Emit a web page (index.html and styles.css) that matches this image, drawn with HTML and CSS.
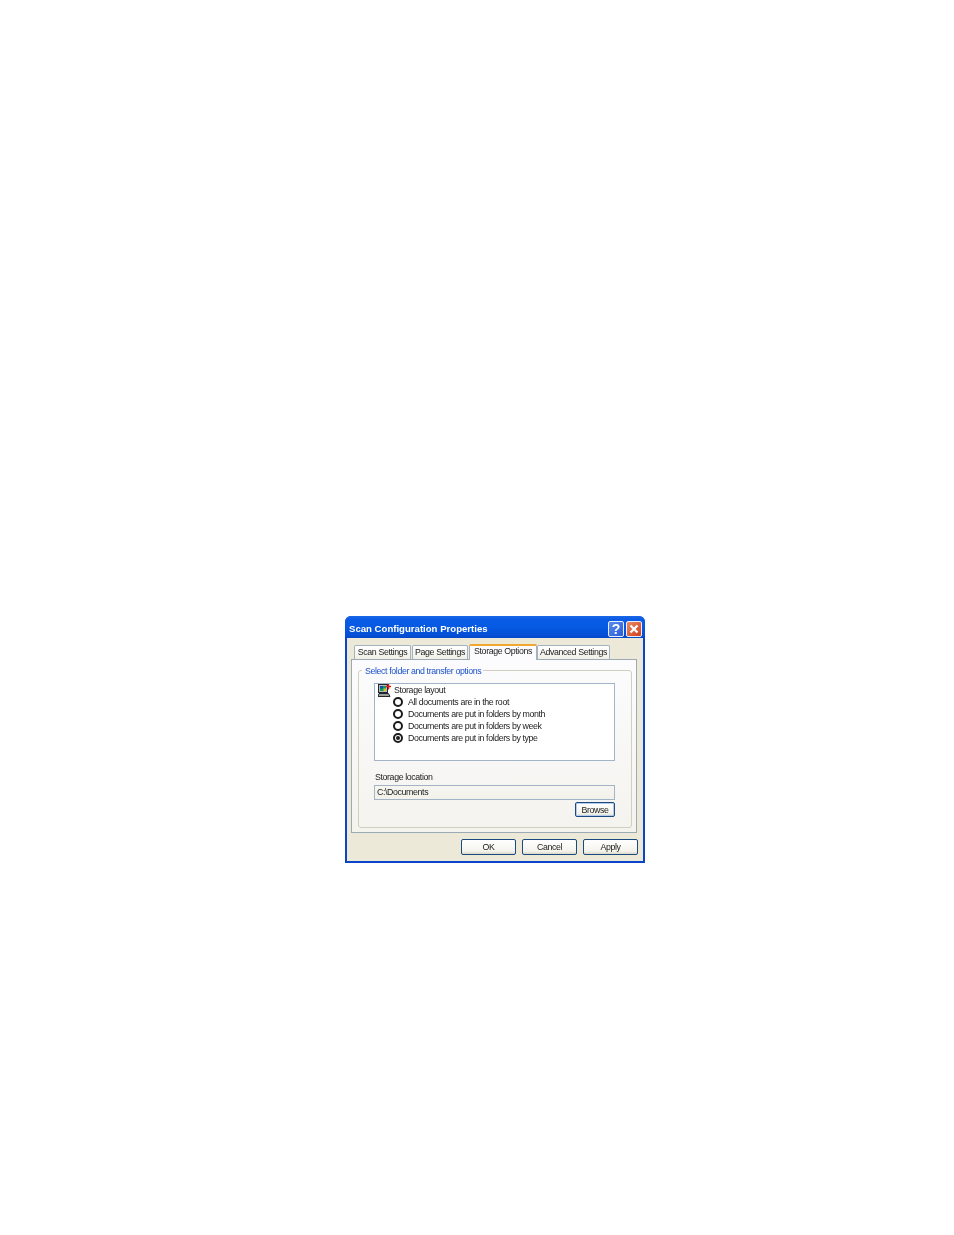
FILE: index.html
```html
<!DOCTYPE html>
<html lang="en">
<head>
<meta charset="utf-8">
<title>Scan Configuration Properties</title>
<link rel="stylesheet" href="styles.css">
</head>
<body>
<main class="page">
  <section class="window">
    <header class="titlebar">
      <h1 class="title">Scan Configuration Properties</h1>
      <div class="controls">
        <span class="ctl help">?</span>
        <span class="ctl close">
          <svg viewBox="0 0 16 16" width="16" height="16"><path d="M4.5 4.5l7 7M11.5 4.5l-7 7" stroke="#fff" stroke-width="2.2" fill="none"/></svg>
        </span>
      </div>
    </header>
    <div class="client">
      <nav class="tabs">
        <span class="tab tab-scan">Scan Settings</span>
        <span class="tab tab-page">Page Settings</span>
        <span class="tab tab-active">Storage Options</span>
        <span class="tab tab-adv">Advanced Settings</span>
      </nav>
      <div class="panel">
        <fieldset class="group">
          <legend class="legend">Select folder and transfer options</legend>
          <div class="list">
            <div class="list-head">
              <svg class="list-icon" viewBox="0 0 13 13" width="13" height="13">
                <rect x="0.5" y="0.5" width="9" height="8" fill="#b8bcb8" stroke="#20262e"/>
                <rect x="2" y="2" width="6" height="5" fill="#129a58"/>
                <rect x="2" y="2" width="3" height="2.5" fill="#1f48b8"/>
                <rect x="5.5" y="4.5" width="2.5" height="2.5" fill="#d8c020"/>
                <path d="M1 9.5h9.5l1.5 3h-12z" fill="#9a9e9a" stroke="#20262e" stroke-width="1"/>
                <path d="M10.5 0v5.5M8 2.5h5" stroke="#e01818" stroke-width="1.4"/>
              </svg>
              <span>Storage layout</span>
            </div>
            <div class="option"><span class="radio"></span><span>All documents are in the root</span></div>
            <div class="option"><span class="radio"></span><span>Documents are put in folders by month</span></div>
            <div class="option"><span class="radio"></span><span>Documents are put in folders by week</span></div>
            <div class="option"><span class="radio radio-on"></span><span>Documents are put in folders by type</span></div>
          </div>
          <div class="field-label">Storage location</div>
          <div class="input">C:\Documents</div>
          <div class="browse-row"><span class="btn btn-browse">Browse</span></div>
        </fieldset>
      </div>
      <footer class="actions">
        <span class="btn btn-main">OK</span>
        <span class="btn btn-main">Cancel</span>
        <span class="btn btn-main">Apply</span>
      </footer>
    </div>
  </section>
</main>
</body>
</html>
```
FILE: styles.css
```css
* { box-sizing: border-box; }
html, body { margin: 0; padding: 0; background: #fff; }
body {
  font-family: "Liberation Sans", Arial, sans-serif;
  font-size: 8.8px;
  letter-spacing: -0.38px;
  color: #222;
}
.page { width: 954px; height: 1235px; padding: 616px 0 0 345px; }

.window {
  width: 300px;
  height: 247px;
  display: flex;
  flex-direction: column;
  background: #0a45c8;
  border-radius: 6px 6px 0 0;
  overflow: hidden;
  filter: blur(0.25px);
}
.titlebar {
  height: 22px;
  flex: none;
  display: flex;
  align-items: center;
  justify-content: space-between;
  padding: 3px 3px 0 4px;
  background: linear-gradient(#1a66e6 0, #0a5ce6 15%, #0558e0 55%, #0450d6 85%, #0348c8 100%);
}
.title {
  margin: 0;
  font-size: 9.6px;
  font-weight: 700;
  letter-spacing: 0;
  color: #fff;
}
.controls { display: flex; gap: 2px; margin-top: 1px; }
.ctl {
  width: 16px;
  height: 16px;
  border: 1px solid #e8eefc;
  border-radius: 2px;
  display: flex;
  align-items: center;
  justify-content: center;
}
.help {
  background: linear-gradient(135deg, #5a8cf0, #2a5cd8);
  color: #fff;
  font-size: 14px;
  font-weight: 700;
  letter-spacing: 0;
}
.close { background: linear-gradient(135deg, #ec8a68, #d0401a); }
.close svg { margin: -1px; flex: none; }

.client {
  flex: 1;
  margin: 0 2px 2px;
  background: #ece9d8;
  display: flex;
  flex-direction: column;
  padding: 5px 6px 0 4px;
}
.tabs { display: flex; align-items: flex-end; height: 16px; flex: none; padding-left: 3px; position: relative; z-index: 1; white-space: nowrap; }
.tab {
  height: 14px;
  display: flex;
  align-items: center;
  justify-content: center;
  padding-bottom: 2px;
  border: 1px solid #a3b2bc;
  border-bottom: none;
  border-radius: 2px 2px 0 0;
  background: linear-gradient(#fff, #f0efe6);
  margin-right: 1px;
}
.tab-scan { width: 57px; }
.tab-page { width: 56px; }
.tab-active {
  width: 68px;
  height: 16px;
  margin-right: 0;
  padding-bottom: 5px;
  background: #fcfcfe;
  border-top: 2px solid #f0a830;
  margin-bottom: -1px;
}
.tab-adv { width: 73px; }

.panel {
  width: 286px;
  height: 174px;
  flex: none;
  border: 1px solid #9caab4;
  background: linear-gradient(#fcfcfe, #f4f3ee);
  padding: 4px 4px 4px 6px;
}
.group {
  margin: 0;
  padding: 7px 16px 0 15px;
  height: 164px;
  border: 1px solid #d0d0bf;
  border-radius: 3px;
  min-width: 0;
}
.legend {
  margin-left: -12px;
  padding: 2px 2px 0 3px;
  color: #1a50c8;
  line-height: 10px;
}
.list {
  height: 78px;
  border: 1px solid #a3b4c8;
  background: #fff;
  padding: 0 0 0 3px;
}
.list-head { display: flex; align-items: center; gap: 3px; height: 12px; }
.list-icon { flex: none; }
.option { display: flex; align-items: center; height: 12px; padding-left: 15px; gap: 5px; }
.radio {
  width: 10px;
  height: 10px;
  border: 2px solid #1c1c1c;
  border-radius: 50%;
  flex: none;
  display: flex;
  align-items: center;
  justify-content: center;
  background: #fff;
}
.radio-on::after {
  content: "";
  width: 4px;
  height: 4px;
  border-radius: 50%;
  background: #1c1c1c;
}
.field-label { margin-top: 11px; height: 13px; line-height: 11px; padding-left: 1px; }
.input {
  height: 15px;
  border: 1px solid #a3b4c8;
  background: linear-gradient(#f6f5ef, #f2f1ea);
  line-height: 13px;
  padding-left: 2px;
}
.browse-row { display: flex; justify-content: flex-end; margin-top: 2px; }
.btn {
  display: flex;
  align-items: center;
  justify-content: center;
  border: 1px solid #1a4a80;
  border-radius: 2px;
  background: linear-gradient(#fff, #f4f3ec 80%, #dcd8c8);
}
.btn-browse {
  width: 40px;
  height: 15px;
  box-shadow: inset 0 0 0 1px #b4cbee;
}
.actions { display: flex; justify-content: flex-end; gap: 6px; padding: 6px 0 0; margin-right: -1px; }
.btn-main { width: 55px; height: 16px; }
```
